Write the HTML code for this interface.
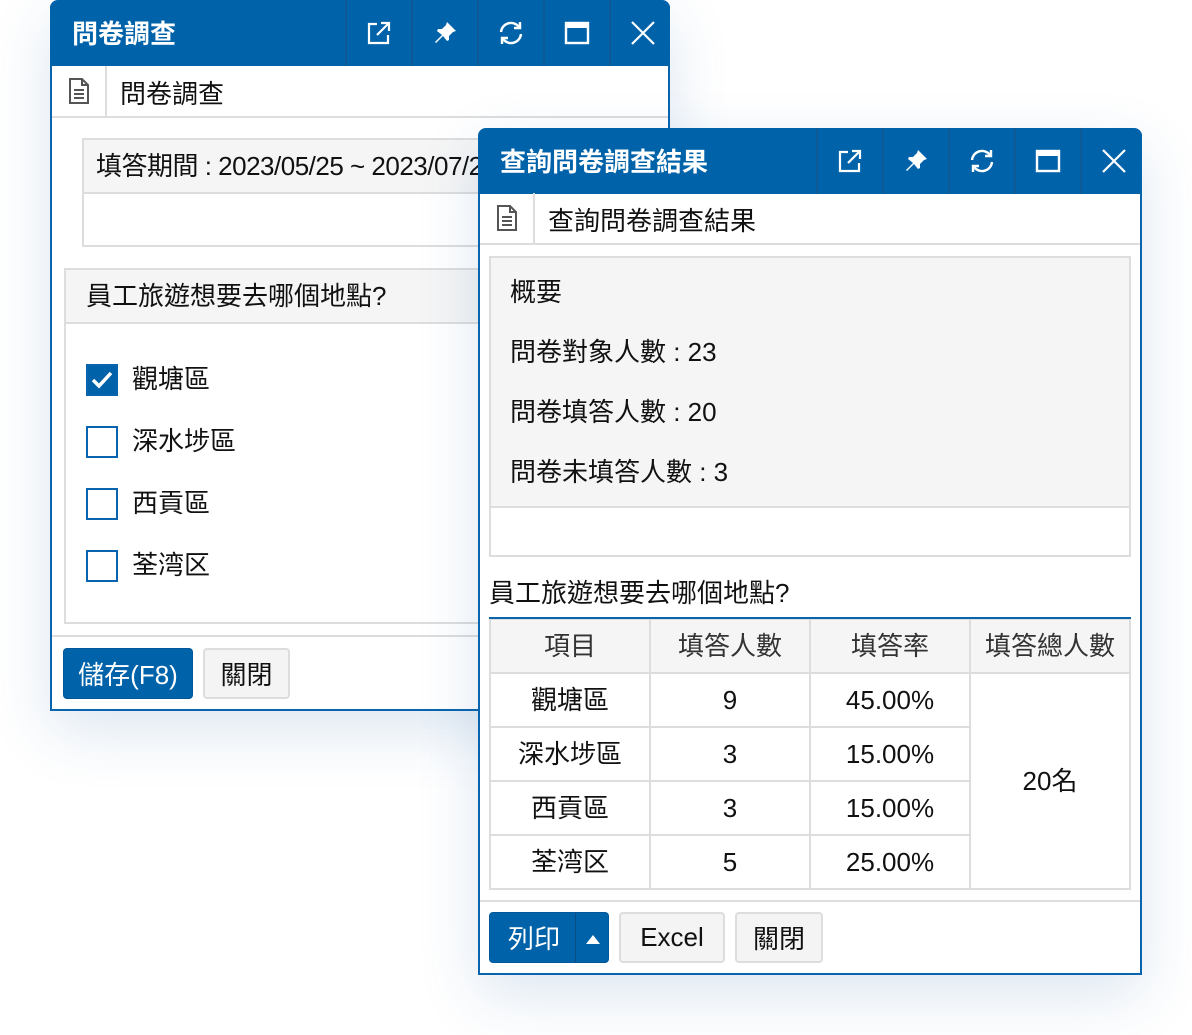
<!DOCTYPE html>
<html><head><meta charset="utf-8">
<style>
*{box-sizing:border-box;margin:0;padding:0}
body{width:1192px;height:1035px;background:#fff;position:relative;overflow:hidden;font-family:"Liberation Sans","Noto Sans CJK TC",sans-serif;color:#111}
.a{position:absolute}
.win{position:absolute;background:#fff;border:2px solid #0a64ad;border-top:none;box-shadow:0 20px 60px rgba(40,100,170,0.16);border-radius:8px 8px 0 0}
.tb{position:absolute;left:-2px;right:-2px;top:0;height:66px;background:#0063aa;border-radius:8px 8px 0 0;color:#fff;font-size:26px;font-weight:bold}
.tb .t{position:absolute;left:22px;top:14px}
.ib{position:absolute;top:0;width:66px;height:66px;border-left:2px solid #0d5a96;display:flex;align-items:center;justify-content:center}
.hd{position:absolute;left:0;right:0;height:52px;border-bottom:2px solid #ddd;font-size:26px}
.hd .ic{position:absolute;left:0;top:0;width:55px;height:50px;border-right:2px solid #ddd;display:flex;align-items:center;justify-content:center}
.hd .t{position:absolute;left:68px;top:8px}
.txt{font-size:26px;white-space:nowrap;line-height:36px}
.cb{position:absolute;width:32px;height:32px;border:2px solid #0a64ad;background:#fff}
.btn{position:absolute;height:51px;border-radius:4px;font-size:26px;display:flex;align-items:center;justify-content:center}
.pri{background:#0063aa;color:#fff;border:1px solid #00589a}
.sec{background:#f4f4f4;border:2px solid #ddd;color:#111}
table{position:absolute;border-collapse:collapse;font-size:26px;table-layout:fixed}
td,th{border:2px solid #ddd;text-align:center;font-weight:normal;height:54px;width:160px;line-height:30px;padding:0;vertical-align:middle}
th{background:#f5f5f5;color:#333}
</style></head><body>

<!-- Left window -->
<div class="win" style="left:50px;top:0;width:620px;height:711px">
 <div class="tb"><span class="t">問卷調查</span>
  <div class="ib" style="left:295px"><svg width="26" height="26" viewBox="0 0 26 26" fill="none" stroke="#fff" stroke-width="2.2"><path d="M11 4H3v19h19v-8"/><path d="M15 3h8v8M23 3L11 15"/></svg></div>
  <div class="ib" style="left:361px"><svg width="26" height="26" viewBox="0 0 26 26" fill="#fff"><path d="M15 2l9 9-3 1-4 4 0 4-2 1-4-5-7 7 -1-1 7-7-5-4 1-2 4 0 4-4z"/></svg></div>
  <div class="ib" style="left:427px"><svg width="28" height="28" viewBox="0 0 28 28" fill="none" stroke="#fff" stroke-width="2.4"><path d="M4 13a10 10 0 0 1 18-5"/><path d="M24 15a10 10 0 0 1-18 5"/><path d="M23 3v6h-6" fill="none"/><path d="M5 25v-6h6"/></svg></div>
  <div class="ib" style="left:493px"><svg width="26" height="26" viewBox="0 0 26 26" fill="none" stroke="#fff" stroke-width="2.4"><rect x="2" y="3" width="22" height="20"/><path d="M2 6h22" stroke-width="4"/></svg></div>
  <div class="ib" style="left:559px"><svg width="26" height="26" viewBox="0 0 26 26" stroke="#fff" stroke-width="2.2"><path d="M2 2L24 24M24 2L2 24"/></svg></div>
 </div>
 <div class="hd" style="top:66px"><div class="ic"><svg width="22" height="26" viewBox="0 0 22 26" fill="none" stroke="#555" stroke-width="2"><path d="M2 1h12l6 6v18H2z"/><path d="M14 1v6h6"/><path d="M6 12h10M6 16h10M6 20h10"/></svg></div><span class="t">問卷調查</span></div>
 <div class="a" style="left:30px;top:138px;width:600px;height:109px;border:2px solid #ddd">
  <div class="a" style="left:0;top:0;right:0;height:54px;background:#f5f5f5;border-bottom:2px solid #ddd"></div>
  <span class="a txt" style="left:12px;top:8px;letter-spacing:-0.5px">填答期間 : 2023/05/25 ~ 2023/07/25</span>
 </div>
 <div class="a" style="left:12px;top:268px;width:620px;height:356px;border:2px solid #ddd">
  <div class="a" style="left:0;top:0;right:0;height:54px;background:#f5f5f5;border-bottom:2px solid #ddd"></div>
  <span class="a txt" style="left:20px;top:8px">員工旅遊想要去哪個地點?</span>
 </div>
 <div class="cb" style="left:34px;top:364px;background:#0063aa"><svg width="28" height="28" viewBox="0 0 28 28" fill="none" stroke="#fff" stroke-width="3.5"><path d="M5 14l6 6L23 7"/></svg></div>
 <span class="a txt" style="left:80px;top:361px">觀塘區</span>
 <div class="cb" style="left:34px;top:426px"></div><span class="a txt" style="left:80px;top:423px">深水埗區</span>
 <div class="cb" style="left:34px;top:488px"></div><span class="a txt" style="left:80px;top:485px">西貢區</span>
 <div class="cb" style="left:34px;top:550px"></div><span class="a txt" style="left:80px;top:547px">荃湾区</span>
 <div class="a" style="left:0;right:0;top:635px;border-top:2px solid #ddd"></div>
 <div class="btn pri" style="left:11px;top:648px;width:130px">儲存(F8)</div>
 <div class="btn sec" style="left:151px;top:648px;width:87px">關閉</div>
</div>

<!-- Right window -->
<div class="win" style="left:478px;top:128px;width:664px;height:847px">
 <div class="tb"><span class="t">查詢問卷調查結果</span>
  <div class="ib" style="left:338px"><svg width="26" height="26" viewBox="0 0 26 26" fill="none" stroke="#fff" stroke-width="2.2"><path d="M11 4H3v19h19v-8"/><path d="M15 3h8v8M23 3L11 15"/></svg></div>
  <div class="ib" style="left:404px"><svg width="26" height="26" viewBox="0 0 26 26" fill="#fff"><path d="M15 2l9 9-3 1-4 4 0 4-2 1-4-5-7 7 -1-1 7-7-5-4 1-2 4 0 4-4z"/></svg></div>
  <div class="ib" style="left:470px"><svg width="28" height="28" viewBox="0 0 28 28" fill="none" stroke="#fff" stroke-width="2.4"><path d="M4 13a10 10 0 0 1 18-5"/><path d="M24 15a10 10 0 0 1-18 5"/><path d="M23 3v6h-6"/><path d="M5 25v-6h6"/></svg></div>
  <div class="ib" style="left:536px"><svg width="26" height="26" viewBox="0 0 26 26" fill="none" stroke="#fff" stroke-width="2.4"><rect x="2" y="3" width="22" height="20"/><path d="M2 6h22" stroke-width="4"/></svg></div>
  <div class="ib" style="left:602px"><svg width="26" height="26" viewBox="0 0 26 26" stroke="#fff" stroke-width="2.2"><path d="M2 2L24 24M24 2L2 24"/></svg></div>
 </div>
 <div class="hd" style="top:65px"><div class="ic"><svg width="22" height="26" viewBox="0 0 22 26" fill="none" stroke="#555" stroke-width="2"><path d="M2 1h12l6 6v18H2z"/><path d="M14 1v6h6"/><path d="M6 12h10M6 16h10M6 20h10"/></svg></div><span class="t">查詢問卷調查結果</span></div>
 <div class="a" style="left:9px;top:128px;width:642px;height:301px;border:2px solid #ddd">
  <div class="a" style="left:0;top:0;right:0;height:250px;background:#f5f5f5;border-bottom:2px solid #ddd"></div>
  <span class="a txt" style="left:19px;top:16px">概要</span>
  <span class="a txt" style="left:19px;top:76px">問卷對象人數 : 23</span>
  <span class="a txt" style="left:19px;top:136px">問卷填答人數 : 20</span>
  <span class="a txt" style="left:19px;top:196px">問卷未填答人數 : 3</span>
 </div>
 <span class="a txt" style="left:9px;top:447px">員工旅遊想要去哪個地點?</span>
 <div class="a" style="left:9px;top:489px;width:642px;height:2px;background:#0a64ad;z-index:2"></div>
 <table style="left:9px;top:490px;width:642px">
  <tr><th>項目</th><th>填答人數</th><th>填答率</th><th>填答總人數</th></tr>
  <tr><td>觀塘區</td><td>9</td><td>45.00%</td><td rowspan="4">20名</td></tr>
  <tr><td>深水埗區</td><td>3</td><td>15.00%</td></tr>
  <tr><td>西貢區</td><td>3</td><td>15.00%</td></tr>
  <tr><td>荃湾区</td><td>5</td><td>25.00%</td></tr>
 </table>
 <div class="a" style="left:0;right:0;top:772px;border-top:2px solid #ddd"></div>
 <div class="btn pri" style="left:9px;top:784px;width:120px;justify-content:flex-start">
  <span style="margin-left:18px">列印</span>
  <div class="a" style="left:85px;top:0;bottom:0;border-left:1px solid #0a4e85"></div>
  <svg class="a" style="left:95px;top:20px" width="16" height="12" viewBox="0 0 16 12"><path d="M1 11L8 2l7 9z" fill="#fff"/></svg>
 </div>
 <div class="btn sec" style="left:139px;top:784px;width:106px">Excel</div>
 <div class="btn sec" style="left:255px;top:784px;width:88px">關閉</div>
</div>
</body></html>
